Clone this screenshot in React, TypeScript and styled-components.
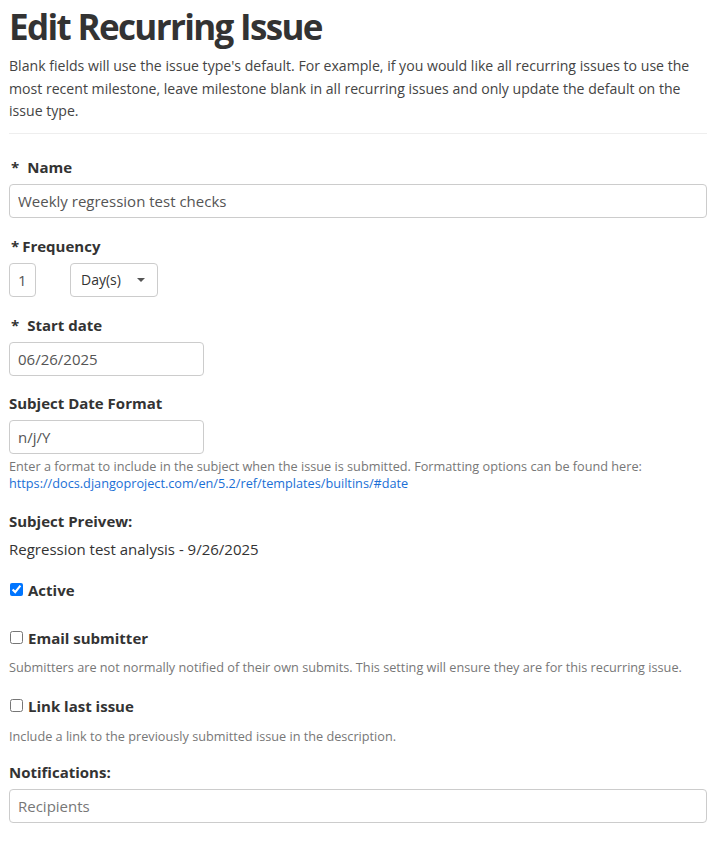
import React from "react";
import styled, { createGlobalStyle } from "styled-components";

const Global = createGlobalStyle`
  html, body { margin: 0; padding: 0; background: #fff; }
  body {
    font-family: "Open Sans", "Noto Sans", sans-serif;
    color: #333;
    font-size: 15px;
    line-height: 1.5;
  }
  * { box-sizing: border-box; }
`;

const Page = styled.div`
  padding: 0 8px 0 9px;
`;

const Title = styled.h1`
  margin: 5px 0 0;
  font-size: 35px;
  font-weight: 700;
  line-height: 44px;
  letter-spacing: -1.65px;
  color: #333;
`;

const Lead = styled.p`
  margin: 6px 0 0;
  font-size: 14.1px;
  line-height: 22.5px;
  color: #444;
`;

const Rule = styled.hr`
  border: 0;
  border-top: 1px solid #eee;
  margin: 10px 0 0;
`;

const Form = styled.div`
  display: flex;
  flex-direction: column;
  padding-top: 22px;
`;

const Field = styled.div<{ $gap?: number }>`
  display: flex;
  flex-direction: column;
  margin-bottom: ${(p) => p.$gap ?? 18}px;
`;

const Label = styled.label`
  font-weight: 700;
  font-size: 15px;
  line-height: 22px;
  margin-bottom: 6px;
  display: flex;
  align-items: baseline;
`;

const Star = styled.span<{ $space: number }>`
  font-size: 15px;
  margin-right: ${(p) => p.$space}px;
  padding-left: 2px;
`;

const Input = styled.input<{ $w?: string }>`
  width: ${(p) => p.$w ?? "100%"};
  height: 34px;
  border: 1px solid #ccc;
  border-radius: 4px;
  padding: 0 8px;
  font-family: inherit;
  font-size: 15px;
  color: #555;
  background: #fff;
  outline: none;
  &::placeholder { color: #777; }
`;

const Row = styled.div`
  display: flex;
  gap: 34px;
`;

const Select = styled.div`
  width: 88px;
  height: 34px;
  border: 1px solid #ccc;
  border-radius: 4px;
  display: flex;
  align-items: center;
  justify-content: space-between;
  padding: 0 12px 0 10px;
  font-size: 14px;
  color: #333;
`;

const Caret = styled.span`
  width: 0;
  height: 0;
  border-left: 4px solid transparent;
  border-right: 4px solid transparent;
  border-top: 4px solid #555;
`;

const Help = styled.div<{ $top?: number }>`
  font-size: 12.7px;
  line-height: 17px;
  color: #777;
  margin-top: ${(p) => p.$top ?? 4}px;
`;

const Link = styled.a`
  color: #1a6fd6;
  text-decoration: none;
`;

const Preview = styled.div`
  font-size: 15px;
  line-height: 22px;
  color: #333;
`;

const CheckRow = styled.label`
  display: flex;
  align-items: center;
  gap: 5px;
  font-weight: 700;
  font-size: 15px;
  line-height: 22px;
`;

const Box = styled.input`
  margin: 0 0 0 1px;
  width: 13px;
  height: 13px;
`;

export default function App() {
  return (
    <>
      <Global />
      <Page>
        <Title>Edit Recurring Issue</Title>
        <Lead>
          Blank fields will use the issue type's default. For example, if you would like all recurring issues to use the
          most recent milestone, leave milestone blank in all recurring issues and only update the default on the issue
          type.
        </Lead>
        <Rule />
        <Form>
          <Field $gap={17}>
            <Label>
              <Star $space={8}>*</Star>Name
            </Label>
            <Input defaultValue="Weekly regression test checks" />
          </Field>
          <Field $gap={17}>
            <Label>
              <Star $space={3}>*</Star>Frequency
            </Label>
            <Row>
              <Input $w="27px" defaultValue="1" />
              <Select>
                Day(s)
                <Caret />
              </Select>
            </Row>
          </Field>
          <Field $gap={16}>
            <Label>
              <Star $space={8}>*</Star>Start date
            </Label>
            <Input $w="195px" defaultValue="06/26/2025" />
          </Field>
          <Field $gap={18}>
            <Label>Subject Date Format</Label>
            <Input $w="195px" defaultValue="n/j/Y" />
            <Help>
              Enter a format to include in the subject when the issue is submitted. Formatting options can be found here:
              <br />
              <Link href="#">https://docs.djangoproject.com/en/5.2/ref/templates/builtins/#date</Link>
            </Help>
          </Field>
          <Field $gap={19}>
            <Label>Subject Preivew:</Label>
            <Preview>Regression test analysis - 9/26/2025</Preview>
          </Field>
          <Field $gap={26}>
            <CheckRow>
              <Box type="checkbox" defaultChecked />
              Active
            </CheckRow>
          </Field>
          <Field $gap={19}>
            <CheckRow>
              <Box type="checkbox" />
              Email submitter
            </CheckRow>
            <Help $top={10}>
              Submitters are not normally notified of their own submits. This setting will ensure they are for this
              recurring issue.
            </Help>
          </Field>
          <Field $gap={16}>
            <CheckRow>
              <Box type="checkbox" />
              Link last issue
            </CheckRow>
            <Help $top={11}>Include a link to the previously submitted issue in the description.</Help>
          </Field>
          <Field>
            <Label>Notifications:</Label>
            <Input placeholder="Recipients" />
          </Field>
        </Form>
      </Page>
    </>
  );
}
